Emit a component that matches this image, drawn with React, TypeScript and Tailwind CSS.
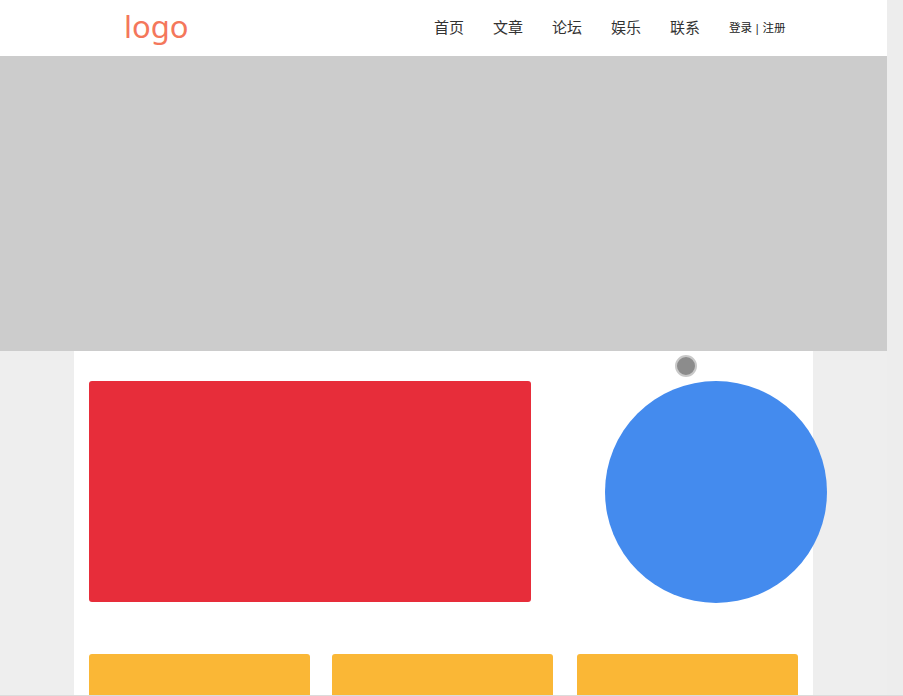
export default function App() {
  const nav = ["首页", "文章", "论坛", "娱乐", "联系"];
  return (
    <div className="w-[903px] h-[696px] overflow-hidden bg-[#eeeeee] flex flex-col" style={{ fontFamily: '"Noto Sans", "Noto Sans CJK SC", sans-serif' }}>
      <div className="flex h-[695px] overflow-hidden">
        <div className="w-[887px] flex flex-col shrink-0">
          <header className="h-[56px] bg-white flex items-center shrink-0">
            <div className="ml-[124px] w-[63px] text-[31px] leading-none text-[#f4775b] -mt-[3px]">logo</div>
            <nav className="ml-[247px] flex items-center gap-[29px] text-[15px] text-[#333] -mt-[2px]">
              {nav.map((n) => (
                <span key={n}>{n}</span>
              ))}
              <span className="text-[11.5px] text-[#222] flex items-center mt-[1px]">
                登录<span className="mx-[2px]">|</span>注册
              </span>
            </nav>
          </header>
          <div className="h-[295px] bg-[#cccccc] shrink-0" />
          <div className="flex-1">
            <div className="relative ml-[74px] w-[739px] h-full bg-white pt-[30px] pl-[15px]">
              <div className="absolute left-[601px] top-[4px] w-[22px] h-[22px] rounded-full bg-[#8c8c8c] border-2 border-[#c9c9c9]" />
              <div className="flex">
                <div className="w-[442px] h-[221px] bg-[#e72d3a] rounded-[3px] shrink-0" />
                <div className="ml-[74px] w-[222px] h-[222px] rounded-full bg-[#448bee] shrink-0" />
              </div>
              <div className="mt-[51px] flex">
                <div className="w-[221px] h-[60px] bg-[#fab736] rounded-[3px] shrink-0" />
                <div className="ml-[22px] w-[221px] h-[60px] bg-[#fab736] rounded-[3px] shrink-0" />
                <div className="ml-[24px] w-[221px] h-[60px] bg-[#fab736] rounded-[3px] shrink-0" />
              </div>
            </div>
          </div>
        </div>
        <div className="flex-1 bg-[#ededed]" />
      </div>
      <div className="h-[1px] bg-[#dcdcdc]" />
    </div>
  );
}
